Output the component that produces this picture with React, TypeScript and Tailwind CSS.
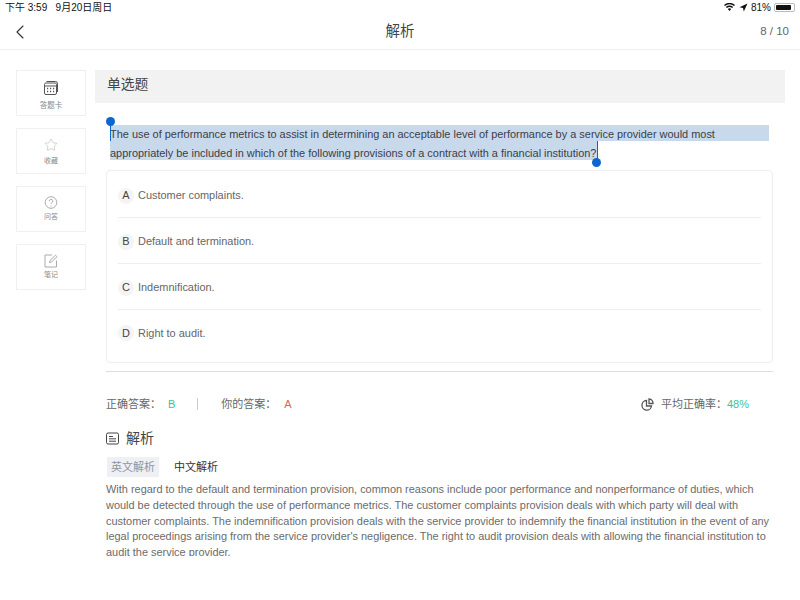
import { ChevronLeft, Star } from "lucide-react";

const font = { cn: "font-['Liberation_Sans','Noto_Sans_CJK_SC',sans-serif]" };

const options = [
  { key: "A", text: "Customer complaints." },
  { key: "B", text: "Default and termination." },
  { key: "C", text: "Indemnification." },
  { key: "D", text: "Right to audit." },
];

function CardIcon() {
  return (
    <svg width="16" height="16" viewBox="0 0 16 16" fill="none" stroke="#555" strokeWidth="1">
      <rect x="1.5" y="3" width="12" height="11.5" rx="1.5" />
      <path d="M3.5 1.5h9a2 2 0 0 1 2 2v8.5" />
      <path d="M1.5 6h12" />
      <path d="M4 8.5h1.2M7 8.5h1.2M10 8.5h1.2M4 11.5h1.2M7 11.5h1.2M10 11.5h1.2" strokeWidth="1.3" />
    </svg>
  );
}

function AskIcon() {
  return (
    <svg width="14" height="14" viewBox="0 0 14 14" fill="none" stroke="#aaa" strokeWidth="1">
      <circle cx="7" cy="6.5" r="5.8" />
      <path d="M5.2 5.2a1.8 1.8 0 1 1 2.6 1.6c-.6.3-.8.7-.8 1.3" />
      <path d="M7 9.6v.8" />
    </svg>
  );
}

function NoteIcon() {
  return (
    <svg width="14" height="14" viewBox="0 0 14 14" fill="none" stroke="#aaa" strokeWidth="1">
      <path d="M12.5 6.5v6.5h-11.500v-12h7" />
      <path d="M5.500 8.500l.5-2 5.500-5.300 1.500 1.500-5.500 5.300z" />
    </svg>
  );
}

function SideCard({ label, icon, first }: { label: string; icon: React.ReactNode; first?: boolean }) {
  return (
    <div className={`w-[70px] h-[46px] border border-[#f0f0f0] flex flex-col items-center justify-center ${first ? "gap-[5px] pt-[5px]" : "gap-[2px]"}`}>
      {icon}
      <span className={`leading-[10px] text-[#888] ${first ? "text-[7.5px]" : "text-[7px]"}`}>{label}</span>
    </div>
  );
}

function StatusBar() {
  return (
    <div className="h-[14px] flex items-center justify-between pl-[5px] pr-[5px] text-[10px] text-[#111]">
      <span>下午 3:59&nbsp;&nbsp;&nbsp;9月20日周日</span>
      <div className="flex items-center gap-[3px]">
        <svg width="11" height="8" viewBox="0 0 11 8" fill="#111">
          <path d="M5.500 8L3.800 6.100a2.500 2.500 0 0 1 3.400 0zM2.900 5.100L1.800 3.900a5.500 5.500 0 0 1 7.400 0L8.100 5.100a4 4 0 0 0-5.200 0zM1 3.100L0 2a8 8 0 0 1 11 0L10 3.100a6.600 6.600 0 0 0-9 0z" />
        </svg>
        <svg width="9" height="9" viewBox="0 0 9 9" fill="#111" className="ml-[1px]">
          <path d="M8.500.5L4.800 8.500 4 5 .5 4.200z" />
        </svg>
        <span>81%</span>
        <div className="w-[21px] h-[9px] rounded-[2px] border border-[#bbb] p-[1px] flex">
          <div className="w-[15px] bg-[#111] rounded-[1px]" />
        </div>
      </div>
    </div>
  );
}

export default function App() {
  return (
    <div className={`relative w-[800px] h-[600px] overflow-hidden bg-white ${font.cn}`}>
      <StatusBar />
      <div className="relative h-[36px] border-b border-[#f0f0f0] flex items-center justify-between pl-[8px] pr-[11px]">
        <ChevronLeft size={24} strokeWidth={1.1} className="text-[#333]" />
        <span className="absolute left-0 right-0 text-center text-[14.500px] text-[#444] pointer-events-none">解析</span>
        <span className="text-[11.500px] text-[#666]">8 / 10</span>
      </div>

      <div className="flex pt-[20px] pl-[16px]">
        <div className="w-[70px] flex flex-col gap-[12px] shrink-0">
          <SideCard label="答题卡" icon={<CardIcon />} first />
          <SideCard label="收藏" icon={<Star size={14} strokeWidth={0.9} className="text-[#aaa] mt-[1px] mb-[2px]" />} />
          <SideCard label="问答" icon={<AskIcon />} />
          <SideCard label="笔记" icon={<NoteIcon />} />
        </div>

        <div className="ml-[9px] w-[690px]">
          <div className="h-[33px] bg-[#f2f2f2] flex items-center pl-[12px] pb-[2px] text-[13.800px] text-[#444]">单选题</div>

          <div className="relative mt-[22px] ml-[15px] text-[10.950px] text-[#3a4048]">
            <div className="h-[16px] w-[659px] bg-[#c9d9ec] leading-[19px] whitespace-nowrap">
              The use of performance metrics to assist in determining an acceptable level of performance by a service provider would most
            </div>
            <div className="h-[19px] w-[487px] bg-[#c9d9ec] leading-[24px] whitespace-nowrap">
              appropriately be included in which of the following provisions of a contract with a financial institution?
            </div>
            <div className="absolute left-[-4px] top-[-8px] w-[9px] h-[9px] rounded-full bg-[#0d66d0]" />
            <div className="absolute left-0 top-0 w-[1px] h-[16px] bg-[#0d66d0]" />
            <div className="absolute left-[487px] top-[16px] w-[1px] h-[19px] bg-[#0d66d0]" />
            <div className="absolute left-[482px] top-[33px] w-[9px] h-[9px] rounded-full bg-[#0d66d0]" />
          </div>

          <div className="mt-[10px] ml-[11px] w-[667px] h-[193px] border border-[#eeeeee] rounded-[4px] px-[11px] pt-[1px]">
            {options.map((o, i) => (
              <div
                key={o.key}
                className={`h-[46px] flex items-center text-[10.950px] text-[#666] ${i < 3 ? "border-b border-[#eeeeee] pt-[2px]" : ""}`}
              >
                <span className="w-[16px] h-[16px] rounded-full bg-[#f4f4f4] text-[#444] flex items-center justify-center mr-[4px]">{o.key}</span>
                {o.text}
              </div>
            ))}
          </div>

          <div className="mt-[8px] ml-[11px] w-[667px] border-t border-[#dddddd]" />

          <div className="mt-[24px] ml-[11px] w-[667px] flex items-center text-[11px] text-[#666] h-[16px]">
            <span>正确答案：</span>
            <span className="ml-[7px] text-[#3cc29a]">B</span>
            <div className="ml-[22px] h-[12px] w-[1px] bg-[#cccccc]" />
            <span className="ml-[23px]">你的答案：</span>
            <span className="ml-[8px] text-[#d9674f]">A</span>
            <div className="ml-auto flex items-center mr-[24px]">
              <svg width="13" height="13" viewBox="0 0 13 13" fill="none" stroke="#555" strokeWidth="1.300" className="mr-[7px]">
                <path d="M5.500 2.500a4.800 4.800 0 1 0 5 5.500h-5z" />
                <path d="M8 1a4 4 0 0 1 4 4.500H8z" />
              </svg>
              <span>平均正确率：</span>
              <span className="text-[#3cc29a]">48%</span>
            </div>
          </div>

          <div className="mt-[16px] ml-[11px] flex items-center h-[20px]">
            <svg width="13" height="13" viewBox="0 0 13 13" fill="none" stroke="#444" strokeWidth="1">
              <rect x="0.500" y="1" width="12" height="11" rx="1.500" />
              <path d="M3 4.500h4M3 6.800h7M3 9.200h7" />
            </svg>
            <span className="ml-[7px] text-[14px] text-[#444]">解析</span>
          </div>

          <div className="mt-[9px] ml-[12px] flex items-center text-[11px] h-[20px]">
            <span className="h-[20px] px-[4px] bg-[#eff0f3] text-[#8e95a5] flex items-center">英文解析</span>
            <span className="ml-[15px] text-[#333]">中文解析</span>
          </div>

          <div className="mt-[5px] ml-[11px] w-[668px] h-[74px] overflow-hidden text-[10.950px] leading-[15.800px] text-[#6b6b6b]">
            With regard to the default and termination provision, common reasons include poor performance and nonperformance of duties, which would be detected through the use of performance metrics. The customer complaints provision deals with which party will deal with customer complaints. The indemnification provision deals with the service provider to indemnify the financial institution in the event of any legal proceedings arising from the service provider's negligence. The right to audit provision deals with allowing the financial institution to audit the service provider.
          </div>
        </div>
      </div>
    </div>
  );
}
